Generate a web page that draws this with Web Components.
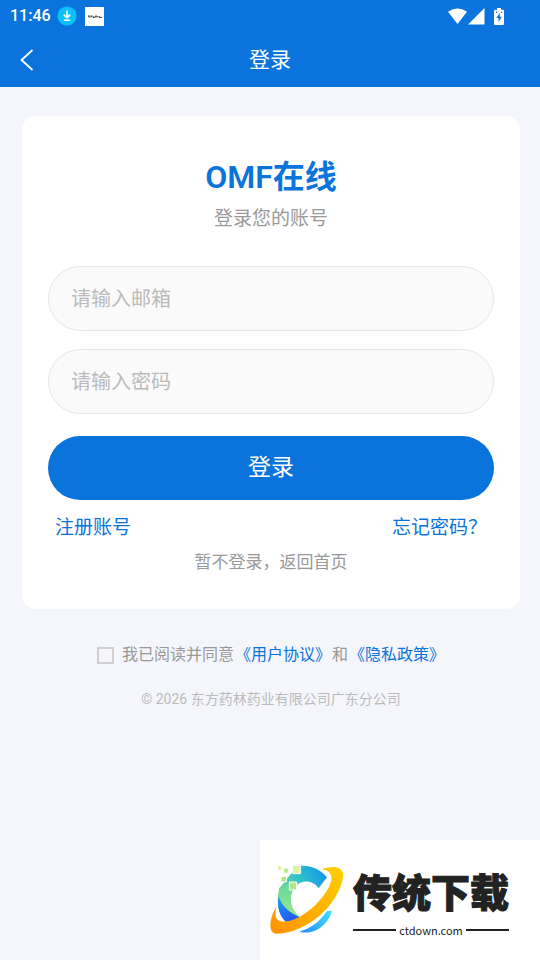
<!DOCTYPE html>
<html lang="zh-CN">
<head>
<meta charset="utf-8">
<meta name="viewport" content="width=device-width, initial-scale=1">
<title>登录</title>
<style>
  :root { --blue: #0b74dc; --page: #f4f6fb; --muted: #999; --faint: #bbb; }
  body { margin: 0; background: var(--page); font-family: Roboto, "Noto Sans CJK SC", sans-serif; }
</style>
</head>
<body>
<login-page></login-page>
<script>
const define = (name, html, setup) => {
  const template = document.createElement('template');
  template.innerHTML = html;
  customElements.define(name, class extends HTMLElement {
    constructor() {
      super();
      this.attachShadow({ mode: 'open' }).append(template.content.cloneNode(true));
    }
    connectedCallback() { if (setup) setup(this, this.shadowRoot); }
  });
};

define('status-bar', `
<style>
  :host { display: flex; align-items: center; height: 32px; padding: 0 36px 0 10px; background: var(--blue); color: #fff; font-size: 16px; font-weight: 500; line-height: 32px; }
  svg { display: block; }
  .download { margin-left: 6px; }
  .app { margin-left: 8px; }
  .wifi { margin-left: auto; }
  .battery { margin-left: 9px; }
</style>
<span>11:46</span>
<svg class="download" width="20" height="20" viewBox="0 0 20 20"><circle cx="10" cy="10" r="9.6" fill="#0cc0fb"/><path d="M10 4.5v7M6.8 8.6 10 11.8l3.2-3.2M6.8 14.3h6.4" fill="none" stroke="#fff" stroke-width="1.6"/></svg>
<svg class="app" width="19" height="19" viewBox="0 0 19 19"><path fill="#fff" d="M0 0h19v19H0z"/><path d="M3 9h2.4M4 9v1.6M6 10.5V9h1.6M8.2 9v1.5h1.6M10.3 10.5V9h1.5v1.5M12.5 9l1.5 1.5M14.6 9.2v1.2l2.4.3" fill="none" stroke="#20283c" stroke-width=".9"/></svg>
<svg class="wifi" width="20" height="17" viewBox="0 0 20 17"><path fill="#fff" d="M0 3.8Q9.5-2.8 19 3.8L9.5 16z"/></svg>
<svg width="17" height="17" viewBox="0 0 17 17"><path fill="#fff" d="M16.5 0v16.5H0z"/></svg>
<svg class="battery" width="10" height="17" viewBox="0 0 10 17"><path fill="#fff" d="M3 0h4v1.7h2a1 1 0 0 1 1 1V16a1 1 0 0 1-1 1H1a1 1 0 0 1-1-1V2.700a1 1 0 0 1 1-1h2z"/><path fill="#0b74dc" d="M5.800 4.800 2.300 10h2.200v4l3.300-5.200H5.800zM2 3.800h1.200V5H2zm5 0h1.200V5H7z"/></svg>
`);

define('nav-bar', `
<style>
  :host { display: grid; grid-template-columns: 54px 1fr 54px; align-items: center; height: 55px; background: var(--blue); color: #fff; }
  button { display: flex; align-items: center; height: 55px; padding: 0 0 0 20px; border: 0; background: none; color: inherit; }
  h1 { margin: 0; font-size: 21px; line-height: 32px; font-weight: 400; text-align: center; }
</style>
<button type="button" aria-label="返回"><svg width="14" height="22" viewBox="0 0 14 22"><path d="M12.500 1 1.500 11l11 10" fill="none" stroke="#fff" stroke-width="1.800"/></svg></button>
<h1><slot></slot></h1>
`);

define('text-field', `
<style>
  :host { display: block; }
  input { display: block; box-sizing: border-box; width: 100%; height: 65px; padding: 0 22px; border: 1px solid #e6e6e6; border-radius: 33px; background: #fafafa; font: inherit; font-size: 20px; color: #333; outline: 0; }
  input::placeholder { color: var(--faint); opacity: 1; }
</style>
<input>
`, (host, root) => {
  const input = root.querySelector('input');
  const label = host.getAttribute('label');
  input.type = host.getAttribute('type') || 'text';
  input.placeholder = label;
  input.setAttribute('aria-label', label);
});

define('login-card', `
<style>
  :host { display: block; padding: 40px 26px 33px; border-radius: 14px; background: #fff; }
  h2 { margin: 0; font-size: 32px; line-height: 42px; font-weight: 600; text-align: center; color: var(--blue); }
  p { margin: 6px 0 32px; font-size: 19px; line-height: 30px; text-align: center; color: var(--muted); }
  form { display: flex; flex-direction: column; gap: 18px; }
  .submit { height: 64px; margin-top: 4px; padding: 0 0 6px; border: 0; border-radius: 32px; background: var(--blue); color: #fff; font: inherit; font-size: 23px; }
  nav { display: flex; flex-wrap: wrap; justify-content: space-between; padding: 14px 7px 0; font-size: 19px; line-height: 28px; }
  a { color: var(--blue); text-decoration: none; }
  .home { display: block; width: fit-content; margin: 6px auto 0; font-size: 17px; line-height: 28px; color: var(--muted); }
</style>
<h2>OMF在线</h2>
<p>登录您的账号</p>
<form>
  <text-field type="email" label="请输入邮箱"></text-field>
  <text-field type="password" label="请输入密码"></text-field>
  <button class="submit" type="button">登录</button>
</form>
<nav><a href="#register">注册账号</a><a href="#forgot">忘记密码？</a></nav>
<a class="home" href="#home">暂不登录，返回首页</a>
`);

define('terms-check', `
<style>
  :host { display: flex; flex-wrap: wrap; align-items: center; justify-content: center; gap: 8px; font-size: 16px; line-height: 24px; color: var(--muted); }
  input { appearance: none; box-sizing: border-box; width: 17px; height: 17px; margin: 0; border: 2px solid #d0d0d0; }
  input:checked { background: var(--blue); }
  .words { display: flex; gap: 1px; }
  a { color: var(--blue); text-decoration: none; }
</style>
<input type="checkbox" id="agree">
<div class="words"><label for="agree">我已阅读并同意</label><a href="#terms">《用户协议》</a><span>和</span><a href="#privacy">《隐私政策》</a></div>
`);

define('site-brand', `
<style>
  :host { display: flex; box-sizing: border-box; align-items: flex-start; gap: 5px; padding: 24px 31px 0 8px; min-height: 120px; background: #fff; color: #222; }
  svg { display: block; }
  .name { font-family: "Noto Sans CJK SC", sans-serif; font-size: 39px; line-height: 52px; font-weight: 900; -webkit-text-stroke: 1px #222; }
  .site { display: flex; align-items: center; gap: 3px; margin-top: 4px; font-family: "Noto Sans CJK SC", sans-serif; font-size: 11px; line-height: 20px; font-weight: 400; }
  .site::before, .site::after { content: ""; flex: 1; height: 2px; background: #222; }
</style>
<svg width="80" height="72" viewBox="24 72 240 216">
  <defs>
    <linearGradient id="c" x1="55" y1="180" x2="200" y2="105" gradientUnits="userSpaceOnUse"><stop offset="0" stop-color="#82df83"/><stop offset=".5" stop-color="#30c4c9"/><stop offset="1" stop-color="#1597e8"/></linearGradient>
    <linearGradient id="l" x1="85" y1="110" x2="85" y2="235" gradientUnits="userSpaceOnUse"><stop offset="0" stop-color="#5dd2a1"/><stop offset="1" stop-color="#9bea8a"/></linearGradient>
    <linearGradient id="b" x1="55" y1="175" x2="95" y2="245" gradientUnits="userSpaceOnUse"><stop offset="0" stop-color="#1b9cf0"/><stop offset="1" stop-color="#2354ef"/></linearGradient>
    <linearGradient id="o" x1="245" y1="85" x2="40" y2="280" gradientUnits="userSpaceOnUse"><stop offset="0" stop-color="#ffce00"/><stop offset="1" stop-color="#ff9200"/></linearGradient>
    <linearGradient id="s" x1="215" y1="212" x2="125" y2="278" gradientUnits="userSpaceOnUse"><stop offset="0" stop-color="#42e3ff"/><stop offset="1" stop-color="#278afa"/></linearGradient>
  </defs>
  <path fill="url(#c)" d="M112 79C145 73 181 87 201 112L176 145C158 118 120 117 101 146C84 172 91 208 120 232L83 250C55 227 47 190 58 145L90 105z"/>
  <path fill="url(#l)" d="M58 143 92 128 101 146C84 172 91 208 120 232C85 220 62 197 55 165z"/>
  <path fill="url(#b)" d="M55 168C65 198 88 219 120 232L83 250C58 230 51 205 55 168z"/>
  <path fill="url(#s)" d="M216 212C207 248 168 288 118 275C158 262 178 246 201 213z"/>
  <path fill="url(#o)" d="M184 88C208 78 243 75 249 100C251 128 233 167 204 202C163 250 94 283 50 281C22 279 28 235 50 199C44 221 45 237 58 242C83 253 128 230 164 197C198 164 218 128 214 108C210 94 198 89 184 88z"/>
  <g stroke="#fff" stroke-width="3"><path fill="#e2f0a0" d="M98 76h23v25H98z"/><path fill="#b8eb87" d="M71 84h14v16H71z"/><path fill="#abe879" d="M63 109h16v17H63z"/><path fill="#b2e789" d="M88 126h22v24H88z"/></g>
  <path fill="#e9f1a8" d="M54 78h10v11H54z"/>
</svg>
<div><div class="name">传统下载</div><div class="site">ctdown.com</div></div>
`);

define('login-page', `
<style>
  :host { display: flex; flex-direction: column; min-height: 100vh; }
  main { padding: 29px 20px 24px 22px; }
  terms-check { margin-top: 34px; }
  footer { margin-top: 20px; font-size: 14px; line-height: 24px; text-align: center; color: var(--faint); }
  site-brand { align-self: flex-end; margin-top: auto; }
</style>
<status-bar></status-bar>
<nav-bar>登录</nav-bar>
<main>
  <login-card></login-card>
  <terms-check></terms-check>
  <footer>© 2026 东方药林药业有限公司广东分公司</footer>
</main>
<site-brand></site-brand>
`);
</script>
</body>
</html>
